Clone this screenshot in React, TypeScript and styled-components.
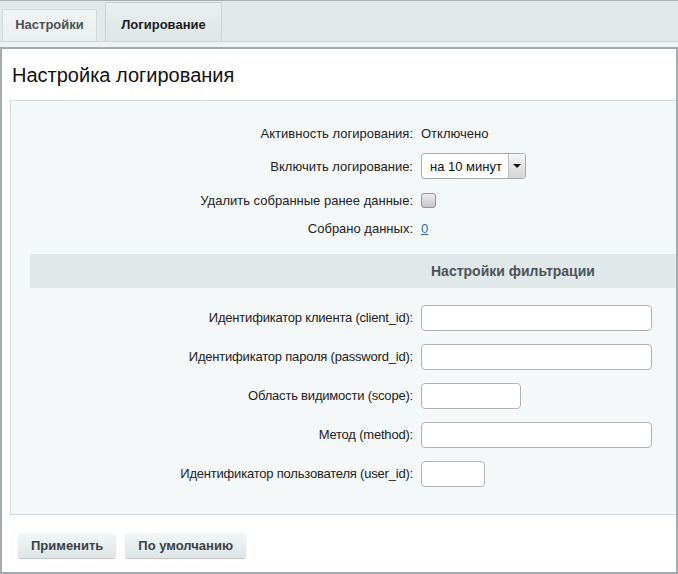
import React from "react";
import styled, { createGlobalStyle } from "styled-components";

const GlobalStyle = createGlobalStyle`
  html, body {
    margin: 0;
    padding: 0;
    background: #ffffff;
  }
  body {
    font-family: "Liberation Sans", Arial, sans-serif;
    font-size: 13px;
    color: #222;
  }
  * { box-sizing: border-box; }
`;

const Page = styled.div`
  width: 678px;
  height: 574px;
  display: flex;
  flex-direction: column;
  overflow: hidden;
`;

const TabBar = styled.div`
  height: 41px;
  border-top: 1px solid #aab0b1;
  background: #e3e9ea;
  display: flex;
  align-items: flex-end;
  gap: 8px;
  padding-left: 2px;
`;

const Tab = styled.div<{ $active?: boolean }>`
  height: ${(p) => (p.$active ? "39px" : "32px")};
  width: ${(p) => (p.$active ? "117px" : "95px")};
  display: flex;
  align-items: flex-end;
  justify-content: center;
  padding-bottom: 9px;
  font-weight: bold;
  font-size: 13px;
  line-height: 15px;
  color: ${(p) => (p.$active ? "#1c1c1c" : "#4b5153")};
  background: ${(p) =>
    p.$active
      ? "linear-gradient(#e9eff0, #dfe6e7)"
      : "linear-gradient(#f1f4f5, #eaeff0)"};
  border: 1px solid ${(p) => (p.$active ? "#c9d1d2" : "#d3dadb")};
  border-bottom: none;
  border-radius: 2px 2px 0 0;
`;

const TabStrip = styled.div`
  height: 6px;
  border-top: 1px solid #cbd3d4;
  background: #eef2f3;
`;

const Panel = styled.div`
  flex: 1;
  border: 2px solid #a6acad;
  background: #ffffff;
  display: flex;
  flex-direction: column;
`;

const Title = styled.h1`
  margin: 0;
  padding: 14px 0 0 10px;
  font-weight: normal;
  font-size: 20px;
  line-height: 24px;
  color: #111;
`;

const FormBox = styled.div`
  margin: 13px 0 0 8px;
  border: 1px solid #d2dadb;
  border-right: none;
  background: #f5f8f9;
  padding: 17px 0 21px 0;
  display: flex;
  flex-direction: column;
`;

const Row = styled.div<{ $h: number }>`
  height: ${(p) => p.$h}px;
  display: grid;
  grid-template-columns: 402px 1fr;
  column-gap: 8px;
  align-items: center;
`;

const Label = styled.div<{ $tight?: boolean }>`
  text-align: right;
  color: #222;
  white-space: nowrap;
  letter-spacing: ${(p) => (p.$tight ? "-0.2px" : "0")};
`;

const Value = styled.div`
  display: flex;
  align-items: center;
  color: #222;
`;

const SectionHeading = styled.div`
  margin: 14px 0 10px 19px;
  height: 34px;
  background: #e1e8ea;
  display: grid;
  grid-template-columns: 383px 1fr;
  column-gap: 8px;
  align-items: center;
`;

const HeadingText = styled.div`
  grid-column: 2;
  padding-left: 10px;
  font-weight: bold;
  font-size: 14px;
  color: #4b5356;
`;

const SelectBox = styled.div`
  width: 105px;
  height: 26px;
  border: 1px solid #a9a9a9;
  border-radius: 3px;
  background: #fff;
  display: flex;
  align-items: stretch;
  overflow: hidden;
`;

const SelectText = styled.div`
  flex: 1;
  display: flex;
  align-items: center;
  padding-left: 8px;
  color: #111;
`;

const SelectArrow = styled.div`
  width: 17px;
  border-left: 1px solid #bdbdbd;
  background: linear-gradient(#f5f5f5, #d4d4d4);
  display: flex;
  align-items: center;
  justify-content: center;
  &::after {
    content: "";
    border-left: 4px solid transparent;
    border-right: 4px solid transparent;
    border-top: 4px solid #111;
  }
`;

const Checkbox = styled.input`
  appearance: none;
  -webkit-appearance: none;
  margin: 0;
  width: 15px;
  height: 15px;
  border: 1px solid #939393;
  border-radius: 3px;
  background: linear-gradient(#eeeeee, #c5c5c5);
`;

const Link = styled.a`
  color: #2a6db5;
  text-decoration: underline;
`;

const TextInput = styled.input<{ $w: number }>`
  width: ${(p) => p.$w}px;
  height: 26px;
  margin: 0;
  border: 1px solid #b3b3b3;
  border-radius: 4px;
  background: #fff;
  padding: 0 5px;
  font: inherit;
`;

const Footer = styled.div`
  padding: 17px 0 14px 16px;
  display: flex;
  gap: 9px;
`;

const Button = styled.button`
  height: 26px;
  padding: 0 13px;
  border: none;
  border-radius: 3px;
  background: linear-gradient(#f4f7f7, #dde5e6);
  box-shadow: 0 1px 1px rgba(0, 0, 0, 0.25), inset 0 1px 0 #ffffff;
  font-family: "Liberation Sans", Arial, sans-serif;
  font-size: 13px;
  font-weight: bold;
  color: #3b4142;
`;

const filterFields = [
  { label: "Идентификатор клиента (client_id):", w: 231 },
  { label: "Идентификатор пароля (password_id):", w: 231 },
  { label: "Область видимости (scope):", w: 100 },
  { label: "Метод (method):", w: 231 },
  { label: "Идентификатор пользователя (user_id):", w: 64 },
];

export default function App() {
  return (
    <>
      <GlobalStyle />
      <Page>
        <TabBar>
          <Tab>Настройки</Tab>
          <Tab $active>Логирование</Tab>
        </TabBar>
        <TabStrip />
        <Panel>
          <Title>Настройка логирования</Title>
          <FormBox>
            <Row $h={30}>
              <Label>Активность логирования:</Label>
              <Value>Отключено</Value>
            </Row>
            <Row $h={36}>
              <Label>Включить логирование:</Label>
              <Value>
                <SelectBox>
                  <SelectText>на 10 минут</SelectText>
                  <SelectArrow />
                </SelectBox>
              </Value>
            </Row>
            <Row $h={32}>
              <Label>Удалить собранные ранее данные:</Label>
              <Value>
                <Checkbox type="checkbox" />
              </Value>
            </Row>
            <Row $h={24}>
              <Label>Собрано данных:</Label>
              <Value>
                <Link>0</Link>
              </Value>
            </Row>
            <SectionHeading>
              <HeadingText>Настройки фильтрации</HeadingText>
            </SectionHeading>
            {filterFields.map((f) => (
              <Row $h={39} key={f.label}>
                <Label $tight>{f.label}</Label>
                <Value>
                  <TextInput type="text" $w={f.w} />
                </Value>
              </Row>
            ))}
          </FormBox>
          <Footer>
            <Button>Применить</Button>
            <Button>По умолчанию</Button>
          </Footer>
        </Panel>
      </Page>
    </>
  );
}
